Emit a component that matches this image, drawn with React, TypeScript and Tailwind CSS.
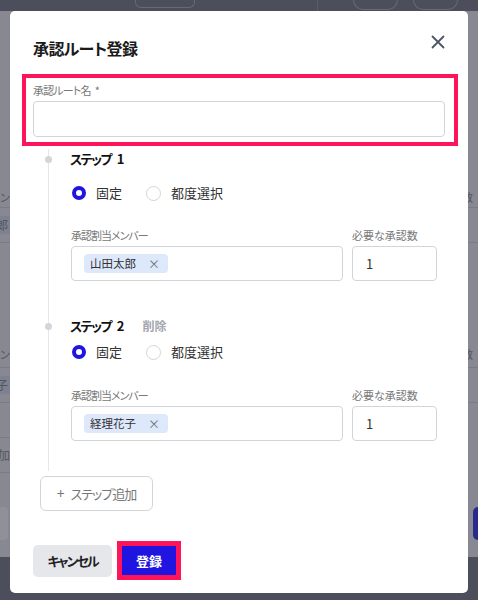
import React from 'react';

const FONT = `font-['Noto_Sans_CJK_JP','Noto_Sans',sans-serif] [font-feature-settings:"palt"]`;

const Radio = ({ checked, label }: { checked: boolean; label: string }) => (
  <label className="flex items-center gap-[10px]">
    <span
      className={
        checked
          ? 'w-[14px] h-[14px] rounded-full border-[4px] border-[#2015e0] bg-white'
          : 'w-[15px] h-[15px] rounded-full border border-[#d1d5db] bg-white'
      }
    />
    <span className="text-[13px] text-[#333]">{label}</span>
  </label>
);

const Step = ({ no, member, removable, first }: { no: number; member: string; removable?: boolean; first?: boolean }) => (
  <div className={first ? '' : 'mt-[35px]'}>
    <div className="relative flex items-center h-[20px] gap-[18px]">
      <span className="absolute left-[-25px] top-[7px] w-[7px] h-[7px] rounded-full bg-[#d4d5da]" />
      <span className="text-[13px] font-bold text-[#111]">
        <span className="tracking-[-1.6px]">ステップ</span>
        <span className="ml-[6px]">{no}</span>
      </span>
      {removable && <span className="text-[12px] font-semibold text-[#a3a6ae]">削除</span>}
    </div>
    <div className={`flex items-center gap-[24px] pl-[2px] h-[20px] ${first ? 'mt-[14px]' : 'mt-[6px]'}`}>
      <Radio checked label="固定" />
      <Radio checked={false} label="都度選択" />
    </div>
    <div className={`flex gap-[9px] pl-[1px] ${first ? 'mt-[25px]' : 'mt-[26px]'}`}>
      <div className="w-[272px]">
        <div className="h-[14px] leading-[14px] text-[11px] text-[#777] tracking-[-1px]">承認割当メンバー</div>
        <div className="mt-[4px] h-[35px] rounded-[4px] border border-[#d1d5db] flex items-center px-[12px]">
          <span className="flex items-center h-[19px] rounded-[4px] bg-[#dde8fb] pl-[6px] pr-[8px] gap-[12px] text-[11.5px] text-[#333]">
            {member}
            <span className="text-[12px] text-[#6b7280]">×</span>
          </span>
        </div>
      </div>
      <div className="w-[85px]">
        <div className="h-[14px] leading-[14px] text-[11px] text-[#777]">必要な承認数</div>
        <div className="mt-[4px] h-[35px] rounded-[4px] border border-[#d1d5db] flex items-center px-[13px] text-[13px] text-[#333]">1</div>
      </div>
    </div>
  </div>
);

const Background = () => (
  <div className="flex flex-col h-[600px] bg-[#4c4e5b]">
    <div className="h-[11px] flex gap-[10px] overflow-hidden">
      <div className="ml-[135px] w-[60px] h-[8px] rounded-b-[6px] border border-t-0 border-[#676977]" />
      <div className="ml-[112px] w-[1px] h-[11px] bg-[#5a5c69]" />
      <div className="ml-[25px] w-[45px] h-[10px] rounded-b-full border border-t-0 border-[#676977]" />
      <div className="ml-[5px] w-[45px] h-[10px] rounded-b-full border border-t-0 border-[#676977]" />
    </div>
    <div className="h-[546px] bg-[#878891] flex justify-between text-[11px] text-[#55565e]">
      <div className="w-[10px] overflow-hidden flex flex-col">
        <div className="h-[178px] shrink-0" />
        <div className="h-[19px] shrink-0 flex justify-end border-b border-[#7a7b84] whitespace-nowrap">承認割当メン</div>
        <div className="h-[35px] shrink-0 flex items-center justify-end border-b border-[#7a7b84] whitespace-nowrap">
          <span className="bg-[#7d8192] px-[2px] text-[12px]">山田太郎</span>
        </div>
        <div className="h-[103px] shrink-0" />
        <div className="h-[22px] shrink-0 flex justify-end border-b border-[#7a7b84] whitespace-nowrap">承認割当メン</div>
        <div className="h-[35px] shrink-0 flex items-center justify-end border-b border-[#7a7b84] whitespace-nowrap">
          <span className="bg-[#7d8192] px-[2px] text-[12px]">経理花子</span>
        </div>
        <div className="h-[35px] shrink-0 border-b border-[#7a7b84]" />
        <div className="h-[35px] shrink-0 flex items-center justify-end border-b border-[#7a7b84] whitespace-nowrap text-[12px]">ステップ追加</div>
        <div className="h-[34px] shrink-0" />
        <div className="h-[33px] shrink-0 w-[8px] rounded-r-[4px] bg-[#8f9099]" />
      </div>
      <div className="w-[16px] overflow-hidden flex flex-col">
        <div className="h-[178px] shrink-0" />
        <div className="h-[19px] shrink-0 border-b border-[#7a7b84] whitespace-nowrap">数</div>
        <div className="h-[35px] shrink-0 border-b border-[#7a7b84]" />
        <div className="h-[103px] shrink-0" />
        <div className="h-[22px] shrink-0 border-b border-[#7a7b84] whitespace-nowrap">数</div>
        <div className="h-[35px] shrink-0 border-b border-[#7a7b84]" />
        <div className="h-[104px] shrink-0" />
        <div className="h-[33px] shrink-0 ml-[11px] rounded-l-[5px] bg-[#2a2a8e]" />
      </div>
    </div>
    <div className="flex-1" />
  </div>
);

export default function App() {
  return (
    <div className={`relative w-[478px] h-[600px] overflow-hidden ${FONT}`}>
      <Background />
      <div className="absolute left-[10px] top-[11px] w-[458px] h-[582px] rounded-[5px] bg-white px-[23px] pt-[25px]">
        <div className="flex justify-between items-start">
          <h2 className="h-[24px] leading-[24px] text-[16px] font-bold text-[#1a1a1a] tracking-[-0.6px]">承認ルート登録</h2>
          <svg width="14" height="14" viewBox="0 0 14 14" className="mt-[-1px]">
            <path d="M1.5 1.5 L12.5 12.5 M12.5 1.5 L1.5 12.5" stroke="#4b5563" strokeWidth="1.8" strokeLinecap="round" />
          </svg>
        </div>

        <div className="mt-[14px] ml-[-11px] mr-[-13px] border-[4px] border-[#ff1459] pl-[7px] pr-[9px] pt-[5px] pb-[5px]">
          <div className="h-[14px] leading-[14px] text-[11px] text-[#777]">
            <span className="tracking-[-0.8px]">承認ルート名</span>
            <span className="ml-[4px]">*</span>
          </div>
          <div className="mt-[4px] h-[36px] rounded-[4px] border border-[#d1d5db]" />
        </div>

        <div className="mt-[3px] ml-[15px] border-l border-[#e5e7eb] pl-[21px] pb-[30px]">
          <Step no={1} member="山田太郎" first />
          <Step no={2} member="経理花子" removable />
        </div>

        <button className="mt-[5px] ml-[7px] w-[113px] h-[35px] rounded-[6px] border border-[#d1d5db] text-[13px] text-[#777] flex items-center justify-center gap-[6px]">
          <span className="text-[14px]">+</span>
          <span className="tracking-[-1px]">ステップ追加</span>
        </button>

        <div className="mt-[30px] flex items-center gap-[5px]">
          <button className="w-[79px] h-[32px] rounded-[5px] bg-[#e5e7eb] text-[13px] font-semibold text-[#222] tracking-[-2px]">キャンセル</button>
          <div className="border-[5px] border-[#ff1459]">
            <button className="w-[54px] h-[29px] bg-[#2015e0] text-[13px] font-semibold text-white flex items-center justify-center">登録</button>
          </div>
        </div>
      </div>
    </div>
  );
}
